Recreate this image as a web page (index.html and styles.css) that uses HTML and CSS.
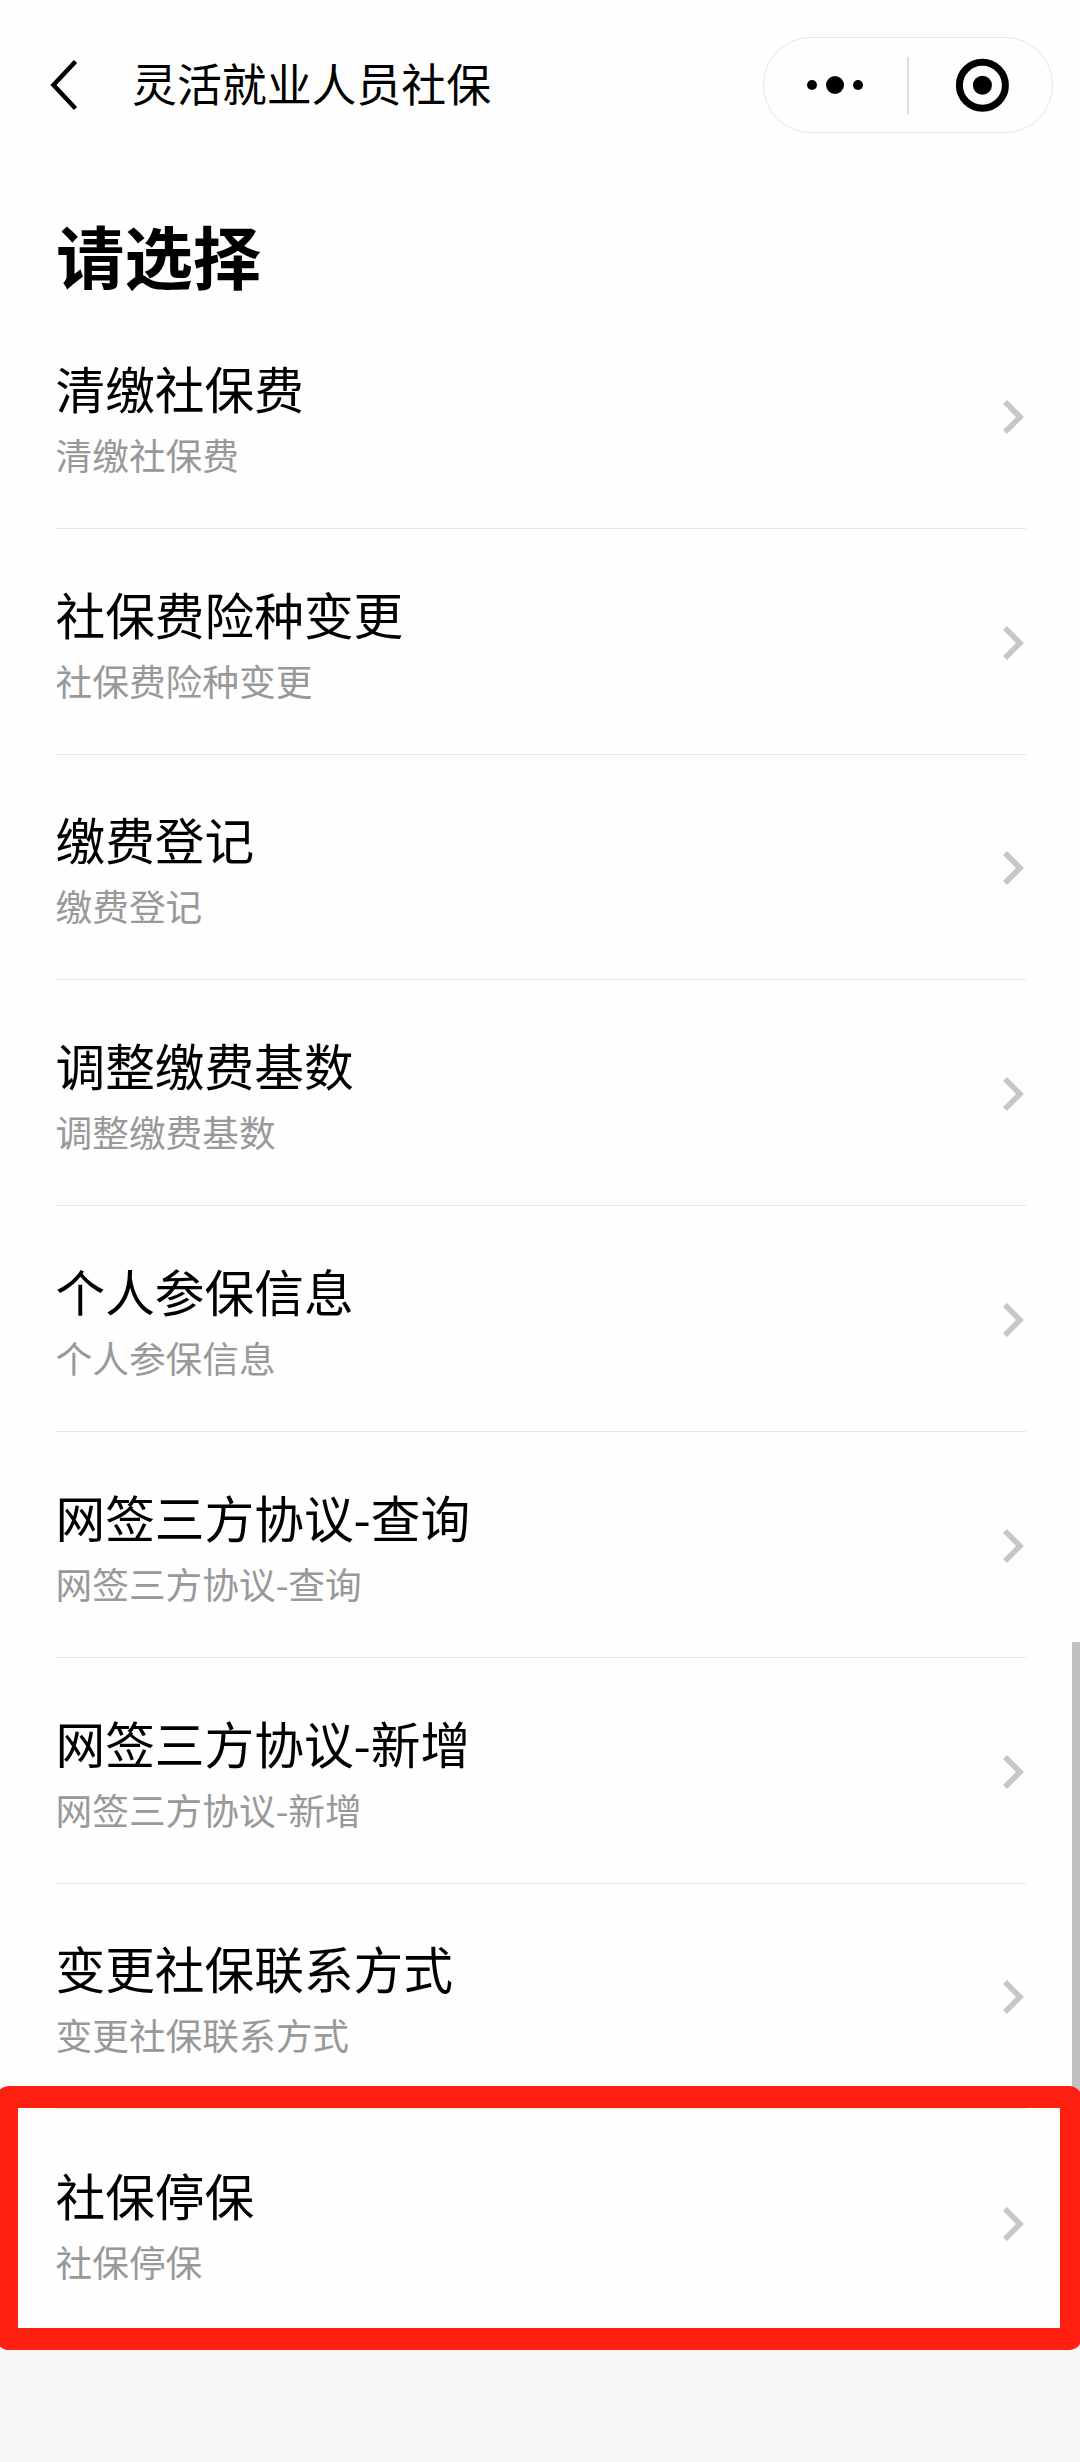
FILE: index.html
```html
<!DOCTYPE html>
<html lang="zh-CN">
<head>
  <meta charset="UTF-8" />
  <title>灵活就业人员社保</title>
  <link rel="stylesheet" href="styles.css">
</head>
<body>
  <header class="nav-bar">
    <svg class="back-icon" viewBox="0 0 30 54" width="30" height="54">
      <path d="M26.5 3.5 L4.5 27 L26.5 50.5" />
    </svg>
    <span class="nav-title">灵活就业人员社保</span>
    <div class="capsule">
      <svg class="more-icon" viewBox="0 0 60 20" width="60" height="20">
        <circle cx="7" cy="10" r="5" />
        <circle cx="30" cy="10" r="9" />
        <circle cx="53" cy="10" r="5" />
      </svg>
      <span class="capsule-line"></span>
      <svg class="close-icon" viewBox="0 0 54 54" width="54" height="54">
        <circle class="ring" cx="27.4" cy="27.3" r="23" />
        <circle cx="27.4" cy="27.3" r="9.5" />
      </svg>
    </div>
  </header>

  <main class="page">
    <h1>请选择</h1>
    <ul class="menu-list" id="menuList">
      <li class="menu-item">
        <div class="menu-text">
          <div class="menu-title">清缴社保费</div>
          <div class="menu-desc">清缴社保费</div>
        </div>
        <svg class="arrow" viewBox="0 0 22 36" width="22" height="36"><path d="M3 3 L18 18 L3 33" /></svg>
      </li>
      <li class="menu-item">
        <div class="menu-text">
          <div class="menu-title">社保费险种变更</div>
          <div class="menu-desc">社保费险种变更</div>
        </div>
        <svg class="arrow" viewBox="0 0 22 36" width="22" height="36"><path d="M3 3 L18 18 L3 33" /></svg>
      </li>
      <li class="menu-item">
        <div class="menu-text">
          <div class="menu-title">缴费登记</div>
          <div class="menu-desc">缴费登记</div>
        </div>
        <svg class="arrow" viewBox="0 0 22 36" width="22" height="36"><path d="M3 3 L18 18 L3 33" /></svg>
      </li>
      <li class="menu-item">
        <div class="menu-text">
          <div class="menu-title">调整缴费基数</div>
          <div class="menu-desc">调整缴费基数</div>
        </div>
        <svg class="arrow" viewBox="0 0 22 36" width="22" height="36"><path d="M3 3 L18 18 L3 33" /></svg>
      </li>
      <li class="menu-item">
        <div class="menu-text">
          <div class="menu-title">个人参保信息</div>
          <div class="menu-desc">个人参保信息</div>
        </div>
        <svg class="arrow" viewBox="0 0 22 36" width="22" height="36"><path d="M3 3 L18 18 L3 33" /></svg>
      </li>
      <li class="menu-item">
        <div class="menu-text">
          <div class="menu-title">网签三方协议-查询</div>
          <div class="menu-desc">网签三方协议-查询</div>
        </div>
        <svg class="arrow" viewBox="0 0 22 36" width="22" height="36"><path d="M3 3 L18 18 L3 33" /></svg>
      </li>
      <li class="menu-item">
        <div class="menu-text">
          <div class="menu-title">网签三方协议-新增</div>
          <div class="menu-desc">网签三方协议-新增</div>
        </div>
        <svg class="arrow" viewBox="0 0 22 36" width="22" height="36"><path d="M3 3 L18 18 L3 33" /></svg>
      </li>
      <li class="menu-item">
        <div class="menu-text">
          <div class="menu-title">变更社保联系方式</div>
          <div class="menu-desc">变更社保联系方式</div>
        </div>
        <svg class="arrow" viewBox="0 0 22 36" width="22" height="36"><path d="M3 3 L18 18 L3 33" /></svg>
      </li>
      <li class="menu-item highlighted">
        <div class="menu-text">
          <div class="menu-title">社保停保</div>
          <div class="menu-desc">社保停保</div>
        </div>
        <svg class="arrow" viewBox="0 0 22 36" width="22" height="36"><path d="M3 3 L18 18 L3 33" /></svg>
      </li>
    </ul>
  </main>

  <div class="scrollbar"></div>
</body>
</html>
```

FILE: styles.css
```css
* {
  box-sizing: border-box;
}

body {
  margin: 0;
  position: relative;
  height: 2462px;
  overflow: hidden;
  background: #f7f7f7;
  color: #000;
  font-family: "Noto Sans CJK SC", sans-serif;
}

.nav-bar {
  display: flex;
  align-items: center;
  height: 170px;
  padding: 0 27px 0 49px;
  background: #fefefe;
}

.back-icon {
  fill: none;
  stroke: #000;
  stroke-width: 4.5;
}

.nav-title {
  margin-left: 53px;
  padding-bottom: 5px;
  font-size: 44.9px;
  line-height: 60px;
}

/* mini program capsule */
.capsule {
  display: flex;
  align-items: center;
  width: 290px;
  height: 96px;
  margin-left: auto;
  padding-left: 41px;
  border: 1px solid #e5e5e5;
  border-radius: 48px;
}

.capsule-line {
  width: 2px;
  height: 57px;
  margin: 0 46px 0 42px;
  background: #dedede;
}

.ring {
  fill: none;
  stroke: #000;
  stroke-width: 7;
}

.page {
  height: 2165px;
  padding: 0 54px 0 56px;
  background: #fefefe;
}

h1 {
  margin: 0;
  padding-top: 35px;
  height: 133px;
  font-size: 68.4px;
  line-height: 100px;
  font-weight: 700;
}

.menu-list {
  margin: 0;
  padding: 0;
  list-style: none;
}

.menu-item {
  display: flex;
  justify-content: space-between;
  align-items: center;
  position: relative;
  height: 225.8px;
  padding: 3px 2px 0 0;
  border-bottom: 1px solid #e6e6e6;
}

.menu-text {
  margin-left: -0.5px;
  padding-top: 2px;
}

.menu-title {
  font-size: 49.7px;
  line-height: 66px;
}

.menu-desc {
  margin-top: 6px;
  font-size: 36.7px;
  line-height: 56px;
  color: #999;
}

.arrow {
  fill: none;
  stroke: #c7c7c7;
  stroke-width: 5.5;
}

.menu-item.highlighted {
  border-bottom: none;
}

/* red frame drawn over the last entry */
.highlighted::after {
  content: "";
  box-sizing: border-box;
  position: absolute;
  z-index: 2;
  top: -23px;
  left: -60px;
  right: -56px;
  height: 264px;
  border: 22px solid #ff2012;
  border-radius: 13px;
}

.scrollbar {
  position: absolute;
  top: 1642px;
  right: 0;
  width: 8px;
  height: 460px;
  background: #c0c0c0;
}
```
